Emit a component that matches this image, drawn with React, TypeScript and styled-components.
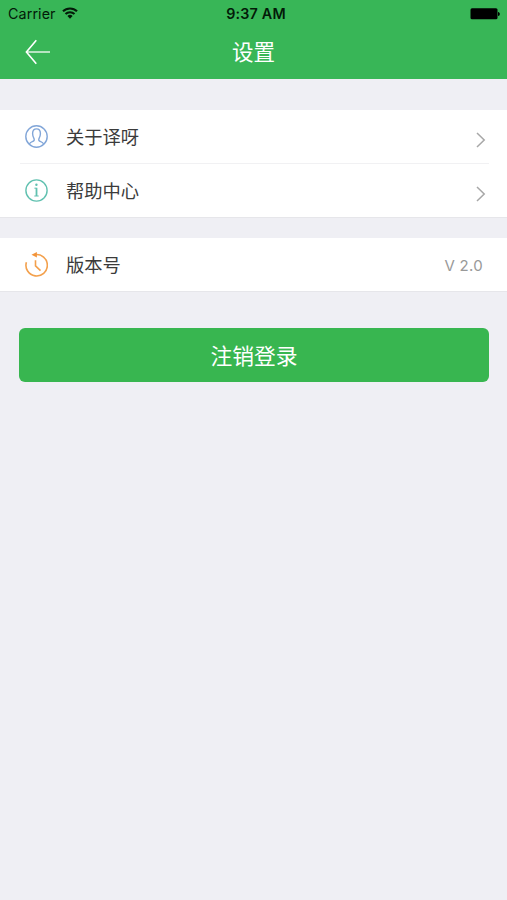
import React from "react";
import styled, { createGlobalStyle } from "styled-components";

const GlobalStyle = createGlobalStyle`
  * { box-sizing: border-box; }
  body {
    margin: 0;
    background: #efeff4;
    font-family: Inter, "Noto Sans CJK SC", sans-serif;
  }
  svg { display: block; flex: none; }
`;

const Screen = styled.main`
  min-height: 900px;
  background: #efeff4;
  display: flex;
  flex-direction: column;
`;

const Header = styled.header`
  background: #38b657;
  height: 79px;
  color: #fff;
`;

const StatusBar = styled.div`
  display: grid;
  grid-template-columns: 1fr auto 1fr;
  align-items: center;
  height: 27px;
  padding: 0 7px 0 8px;
  color: #031a08;
  line-height: 26px;
`;

const Carrier = styled.div`
  display: flex;
  align-items: center;
  gap: 6px;
  font-size: 14.3px;
  letter-spacing: 0.1px;
`;

const Clock = styled.time`
  font-size: 14.3px;
  font-weight: 600;
  letter-spacing: 0.2px;
  padding-left: 4px;
`;

const BatterySlot = styled.div`
  justify-self: end;
  color: #000;
`;

const NavBar = styled.nav`
  display: grid;
  grid-template-columns: 1fr auto 1fr;
  align-items: center;
  height: 50px;
  padding: 0 25px;
`;

const BackButton = styled.button`
  justify-self: start;
  padding: 0;
  border: 0;
  background: none;
  color: inherit;
`;

const Title = styled.h1`
  margin: 0;
  font-size: 21.5px;
  font-weight: 400;
  line-height: 32px;
`;

const Group = styled.section<{ $gap: number }>`
  margin-top: ${(p) => p.$gap}px;
  background: #fff;
  box-shadow: 0 1px 0 #e6e6ea;
`;

const Row = styled.div`
  display: flex;
  align-items: center;
  height: 53px;
  padding: 0 21px 0 25px;
`;

const Divider = styled.div`
  height: 1px;
  margin: 0 18px 0 20px;
  background: #f1f1f3;
`;

const Label = styled.span`
  flex: 1;
  margin-left: 18px;
  color: #3b3b3b;
  font-size: 18.3px;
  line-height: 28px;
`;

const Chevron = styled.div`
  padding-top: 6px;
  color: #a7a7a7;
`;

const Version = styled.span`
  margin-right: 3px;
  padding-top: 2px;
  color: #999;
  font-size: 15px;
  letter-spacing: 0.3px;
`;

const LogoutButton = styled.button`
  margin: 37px 18px 0 19px;
  height: 54px;
  padding: 0 0 2px;
  border: 0;
  border-radius: 6px;
  background: #38b650;
  color: #fff;
  font: inherit;
  font-size: 21.8px;
`;

const WifiIcon = () => (
  <svg width="16" height="13" viewBox="0 0 16 13" fill="none" stroke="currentColor" strokeWidth="2.1">
    <path d="M1 4.3a10 10 0 0 1 14 0M3.5 7.1a6.4 6.4 0 0 1 9 0" />
    <path d="M5.4 9 8 11.8 10.6 9a3.7 3.7 0 0 0-5.2 0Z" fill="currentColor" stroke="none" />
  </svg>
);

const BatteryIcon = () => (
  <svg width="30" height="12" viewBox="0 0 30 12" fill="currentColor">
    <rect x="0.5" y="0.3" width="27" height="11" rx="1.5" />
    <path d="M28 4c2.4 0 2.4 4 0 4Z" />
  </svg>
);

const BackIcon = () => (
  <svg width="26" height="26" viewBox="0 0 26 26" fill="none" stroke="currentColor" strokeWidth="1.6">
    <path d="M11.3 1.3 1.4 13l9.9 11.7" />
    <path d="M1.6 13H25" strokeOpacity="0.8" />
  </svg>
);

const PersonIcon = () => (
  <svg width="23" height="23" viewBox="0 0 23 23" fill="none" stroke="#82a6d8" strokeWidth="1.4">
    <circle cx="11.5" cy="11.5" r="10.7" />
    <path d="M4.4 19c.5-1.3 1.4-1.9 2.9-2.4 1.7-.6 2.3-1.4 1.8-2.7-1-1.8-1.5-3.3-1.5-5.5 0-2.9 1.4-4.5 3.9-4.5s3.9 1.6 3.9 4.5c0 2.2-.5 3.7-1.5 5.5-.5 1.3.1 2.1 1.8 2.7 1.5.5 2.4 1.1 2.9 2.4" />
  </svg>
);

const InfoIcon = () => (
  <svg width="23" height="23" viewBox="0 0 23 23" fill="none" stroke="#61c1b0" strokeWidth="1.4">
    <circle cx="11.5" cy="11.5" r="10.6" />
    <path d="M11.5 8.8V17" strokeWidth="1.8" />
    <path d="M9.4 9.2h2M9.3 17h4.4" strokeWidth="1" />
    <circle cx="11.4" cy="5.8" r="1.2" fill="#61c1b0" stroke="none" />
  </svg>
);

const HistoryIcon = () => (
  <svg width="23" height="25" viewBox="0 0 23 25" fill="none" stroke="#f3a04c" strokeWidth="1.6">
    <path d="M10 2.7A10.7 10.7 0 1 1 1.4 10.2M10.5 8.2v5.6l5 4.8" />
    <path d="m6.5 2.7 5.4-2.7v5.4Z" fill="#f3943a" stroke="none" />
  </svg>
);

const ChevronIcon = () => (
  <svg width="10" height="16" viewBox="0 0 10 16" fill="none" stroke="currentColor" strokeWidth="1.5">
    <path d="m1 1 7.2 7L1 15" />
  </svg>
);

export default function App() {
  return (
    <>
      <GlobalStyle />
      <Screen>
        <Header>
          <StatusBar>
            <Carrier>Carrier <WifiIcon /></Carrier>
            <Clock>9:37 AM</Clock>
            <BatterySlot><BatteryIcon /></BatterySlot>
          </StatusBar>
          <NavBar>
            <BackButton aria-label="返回"><BackIcon /></BackButton>
            <Title>设置</Title>
          </NavBar>
        </Header>
        <Group $gap={31}>
          <Row>
            <PersonIcon />
            <Label>关于译呀</Label>
            <Chevron><ChevronIcon /></Chevron>
          </Row>
          <Divider />
          <Row>
            <InfoIcon />
            <Label>帮助中心</Label>
            <Chevron><ChevronIcon /></Chevron>
          </Row>
        </Group>
        <Group $gap={21}>
          <Row>
            <HistoryIcon />
            <Label>版本号</Label>
            <Version>V 2.0</Version>
          </Row>
        </Group>
        <LogoutButton>注销登录</LogoutButton>
      </Screen>
    </>
  );
}
